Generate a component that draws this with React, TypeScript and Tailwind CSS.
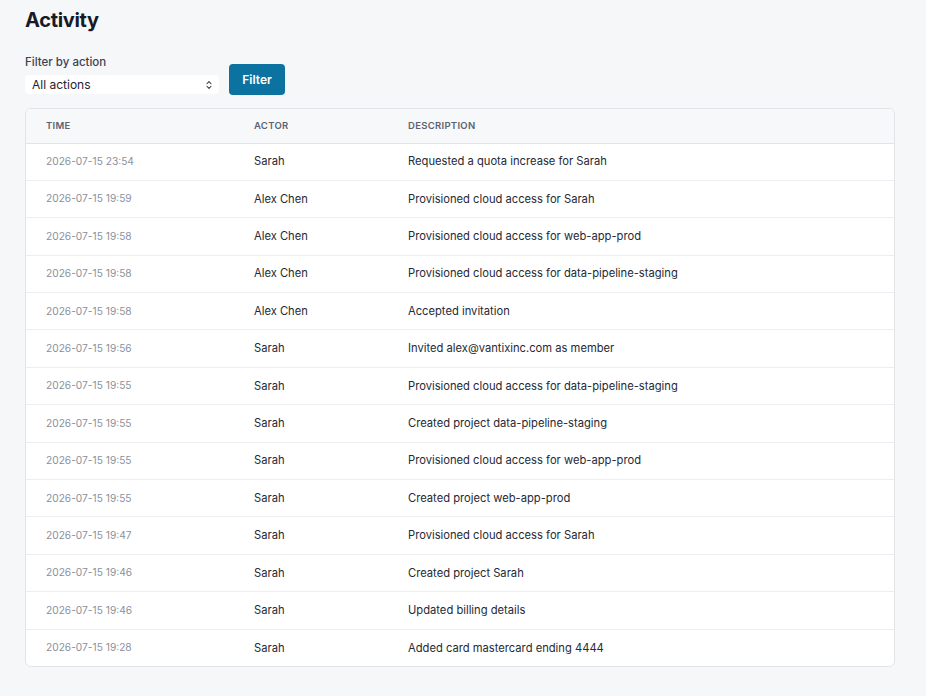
import { ChevronsUpDown } from "lucide-react";

const rows: [string, string, string][] = [
  ["2026-07-15 23:54", "Sarah", "Requested a quota increase for Sarah"],
  ["2026-07-15 19:59", "Alex Chen", "Provisioned cloud access for Sarah"],
  ["2026-07-15 19:58", "Alex Chen", "Provisioned cloud access for web-app-prod"],
  ["2026-07-15 19:58", "Alex Chen", "Provisioned cloud access for data-pipeline-staging"],
  ["2026-07-15 19:58", "Alex Chen", "Accepted invitation"],
  ["2026-07-15 19:56", "Sarah", "Invited alex@vantixinc.com as member"],
  ["2026-07-15 19:55", "Sarah", "Provisioned cloud access for data-pipeline-staging"],
  ["2026-07-15 19:55", "Sarah", "Created project data-pipeline-staging"],
  ["2026-07-15 19:55", "Sarah", "Provisioned cloud access for web-app-prod"],
  ["2026-07-15 19:55", "Sarah", "Created project web-app-prod"],
  ["2026-07-15 19:47", "Sarah", "Provisioned cloud access for Sarah"],
  ["2026-07-15 19:46", "Sarah", "Created project Sarah"],
  ["2026-07-15 19:46", "Sarah", "Updated billing details"],
  ["2026-07-15 19:28", "Sarah", "Added card mastercard ending 4444"],
];

export default function App() {
  return (
    <div className="min-h-[696px] bg-[#f6f7f9] pl-[25px] pr-[31px] pb-8 pt-[6px] font-['Inter',sans-serif] text-[#1f2430]">
      <h1 className="text-[20px] font-bold leading-[28px] tracking-[-0.3px] text-[#161b26]">
        Activity
      </h1>

      {/* Filter form */}
      <div className="mt-[21px] flex items-end gap-[10px]">
        <div>
          <label className="block text-[11.5px] font-medium leading-[14px] text-[#3b4252]">
            Filter by action
          </label>
          <div className="relative mt-[6px] flex h-[19px] w-[194px] items-center rounded-[4px] bg-white pl-[7px] text-[12px] text-[#1f2430]">
            All actions
            <ChevronsUpDown
              size={10}
              strokeWidth={2.5}
              className="absolute right-[5px] top-[5px] text-[#333]"
            />
          </div>
        </div>
        <button className="mb-[-1px] h-[31px] w-[56px] rounded-[4px] bg-[#0c73a0] text-[12px] font-semibold text-white">
          Filter
        </button>
      </div>

      {/* Table */}
      <div className="mt-[14px] overflow-hidden rounded-[6px] border border-[#e2e4e8] bg-white">
        <table className="w-full table-fixed border-collapse text-left">
          <colgroup>
            <col className="w-[208px]" />
            <col className="w-[154px]" />
            <col />
          </colgroup>
          <thead>
            <tr className="h-[34px] border-b border-[#e2e4e8] bg-[#f7f8fa]">
              <th className="pl-[20px] text-[9.5px] font-semibold tracking-[0.3px] text-[#5b6271]">TIME</th>
              <th className="pl-[20px] text-[9.5px] font-semibold tracking-[0.3px] text-[#5b6271]">ACTOR</th>
              <th className="pl-[20px] text-[9.5px] font-semibold tracking-[0.3px] text-[#5b6271]">DESCRIPTION</th>
            </tr>
          </thead>
          <tbody>
            {rows.map(([time, actor, desc], i) => (
              <tr
                key={i}
                className={`h-[37.4px] ${i < rows.length - 1 ? "border-b border-[#eceef1]" : ""}`}
              >
                <td className="pl-[20px] text-[10.2px] text-[#8a909c]">{time}</td>
                <td className="pl-[20px] text-[11.2px] text-[#252a35]">{actor}</td>
                <td className="pl-[20px] text-[11.2px] text-[#252a35]">{desc}</td>
              </tr>
            ))}
          </tbody>
        </table>
      </div>
    </div>
  );
}
